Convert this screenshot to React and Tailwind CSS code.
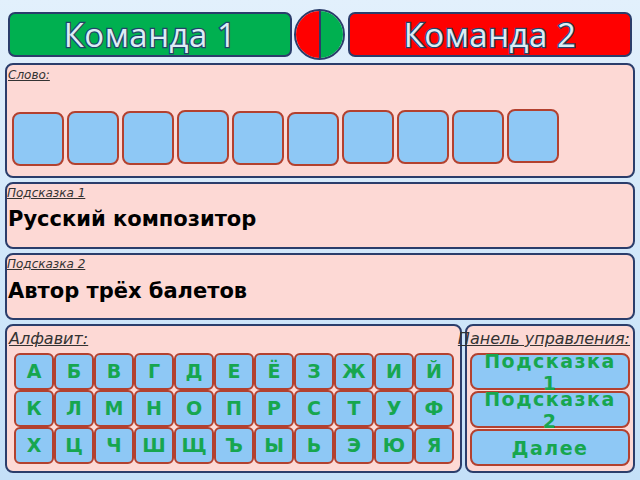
const wordOffsets = ['mt-[3px]', 'mt-[2px]', 'mt-[2px]', 'mt-[1px]', 'mt-[2px]', 'mt-[3px]', 'mt-[1px]', 'mt-[1px]', 'mt-[1px]', 'mt-0'];

const letters = [
  ['А', 'Б', 'В', 'Г', 'Д', 'Е', 'Ё', 'З', 'Ж', 'И', 'Й'],
  ['К', 'Л', 'М', 'Н', 'О', 'П', 'Р', 'С', 'Т', 'У', 'Ф'],
  ['Х', 'Ц', 'Ч', 'Ш', 'Щ', 'Ъ', 'Ы', 'Ь', 'Э', 'Ю', 'Я'],
];

const font = { fontFamily: '"DejaVu Sans", "Noto Sans", sans-serif' };

function TeamButton({ label, color }) {
  return (
    <div
      className={`w-[284px] h-[45px] rounded-[7px] border-2 border-[#2b3d6b] flex items-center justify-center ${color}`}
    >
      <span
        className="text-[33px] font-medium leading-none text-[#dcedf5] [-webkit-text-stroke:2.5px_#23446a] [paint-order:stroke_fill] tracking-[0.5px]"
        style={{ fontFamily: '"Open Sans", "Noto Sans", sans-serif' }}
      >
        {label}
      </span>
    </div>
  );
}

function Label({ children, size }) {
  return (
    <div className={`italic underline text-[#333] leading-none ${size}`} style={font}>
      {children}
    </div>
  );
}

export default function App() {
  return (
    <div className="w-[640px] h-[480px] overflow-hidden bg-gradient-to-b from-[#e2f0fc] to-[#c4e0f8] flex flex-col px-[5px] pt-[12px]" style={font}>
      {/* шапка */}
      <div className="flex items-center h-[45px] pl-[3px]">
        <TeamButton label="Команда 1" color="bg-[#00b050]" />
        <div className="ml-[2px] w-[51px] h-[51px] rounded-full border-2 border-[#2b3d6b] overflow-hidden flex shrink-0">
          <div className="flex-1 bg-[#ff0000] border-r-2 border-[#2b3d6b]"></div>
          <div className="flex-1 bg-[#00b050]"></div>
        </div>
        <div className="ml-[3px]">
          <TeamButton label="Команда 2" color="bg-[#ff0000]" />
        </div>
      </div>

      {/* слово */}
      <div className="mt-[6px] h-[115px] w-[630px] rounded-[8px] border-2 border-[#2b3d6b] bg-[#fdd9d5] px-[1px] pt-[4px]">
        <Label size="text-[12px]">Слово:</Label>
        <div className="flex gap-[3px] ml-[4px] mt-[28px]">
          {wordOffsets.map((m, i) => (
            <div
              key={i}
              className={`w-[52px] h-[54px] rounded-[8px] border-2 border-[#b3412f] bg-[#8ec8f5] ${m}`}
            ></div>
          ))}
        </div>
      </div>

      {/* подсказки */}
      <div className="mt-[4px] h-[67px] w-[630px] rounded-[8px] border-2 border-[#2b3d6b] bg-[#fdd9d5] pt-[3px]">
        <Label size="text-[12px]">Подсказка 1</Label>
        <div className="mt-[10px] ml-[1px] text-[21px] font-bold text-black leading-none">Русский композитор</div>
      </div>

      <div className="mt-[4px] h-[67px] w-[630px] rounded-[8px] border-2 border-[#2b3d6b] bg-[#fdd9d5] pt-[3px]">
        <Label size="text-[12px]">Подсказка 2</Label>
        <div className="mt-[11px] ml-[1px] text-[21px] font-bold text-black leading-none">Автор трёх балетов</div>
      </div>

      {/* нижняя часть */}
      <div className="mt-[4px] flex gap-[3px]">
        <div className="w-[457px] h-[149px] rounded-[8px] border-2 border-[#2b3d6b] bg-[#fdd9d5] pt-[5px] pl-[2px]">
          <Label size="text-[16px]">Алфавит:</Label>
          <div className="mt-[6px] ml-[5px] flex flex-col">
            {letters.map((row, r) => (
              <div key={r} className="flex">
                {row.map((l) => (
                  <div
                    key={l}
                    className="w-[40px] h-[37px] rounded-[6px] border-2 border-[#b3412f] bg-[#8ec8f5] flex items-center justify-center text-[19px] font-bold text-[#17a64f]"
                  >
                    {l}
                  </div>
                ))}
              </div>
            ))}
          </div>
        </div>

        <div className="w-[170px] h-[149px] rounded-[8px] border-2 border-[#2b3d6b] bg-[#fdd9d5] pt-[5px] flex flex-col">
          <div className="flex justify-end pr-[3px] whitespace-nowrap">
            <Label size="text-[16px]">Панель управления:</Label>
          </div>
          <div className="mt-[6px] ml-[3px] flex flex-col gap-[1px]">
            {['Подсказка 1', 'Подсказка 2', 'Далее'].map((t) => (
              <div
                key={t}
                className="w-[160px] h-[37px] rounded-[8px] border-2 border-[#b3412f] bg-[#8ec8f5] flex items-center justify-center text-center text-[19px] font-bold text-[#17a64f] tracking-[1.5px] leading-[22px]"
              >
                <span className="block w-[150px]">{t}</span>
              </div>
            ))}
          </div>
        </div>
      </div>
    </div>
  );
}
